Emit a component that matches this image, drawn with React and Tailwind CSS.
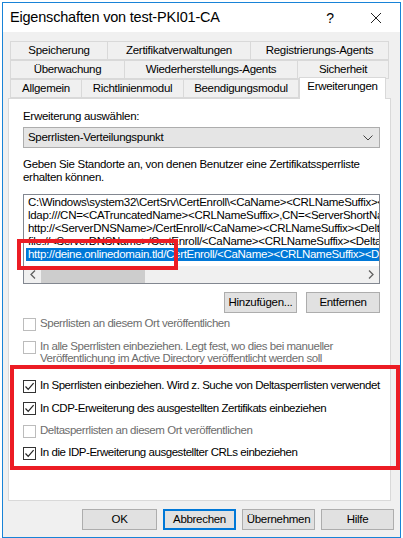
import React from "react";

const Tab = ({ label, w, selected }) => (
  <div
    className={
      selected
        ? "relative z-10 -mt-[2px] -mb-[1px] h-[22px] bg-white border border-[#d9d9d9] border-b-0 flex items-center justify-center shrink-0"
        : "h-[19px] bg-[#f0f0f0] border border-[#d9d9d9] -ml-[1px] first:ml-0 flex items-center justify-center shrink-0"
    }
    style={{ width: w }}
  >
    <span className={selected ? "-mt-[3px]" : ""}>{label}</span>
  </div>
);

const Check = ({ checked, disabled }) => (
  <div
    className={
      "w-[13px] h-[13px] border bg-white shrink-0 flex items-center justify-center " +
      (disabled ? "border-[#bcbcbc]" : "border-[#333333]")
    }
  >
    {checked && (
      <svg width="11" height="11" viewBox="0 0 11 11">
        <path d="M1.5 5.5 L4.2 8.3 L9.6 2.2" fill="none" stroke="#222" strokeWidth="1.2" />
      </svg>
    )}
  </div>
);

const Btn = ({ children, w, focused }) => (
  <div
    className={
      "h-[21px] bg-[#e1e1e1] flex items-center justify-center shrink-0 " +
      (focused ? "border-2 border-[#0078d7]" : "border border-[#adadad]")
    }
    style={{ width: w }}
  >
    {children}
  </div>
);

export default function App() {
  return (
    <div
      className="w-[403px] h-[538px] bg-white pl-[2px] pt-[2px] text-[11.5px] tracking-[-0.3px] text-black leading-none relative overflow-hidden"
      style={{ fontFamily: '"Liberation Sans", Arial, sans-serif' }}
    >
      <div className="w-[399px] h-[536px] border border-[#1883d7] flex flex-col">
        {/* title bar */}
        <div className="h-[29px] bg-white flex items-center pl-[7px] shrink-0">
          <span className="text-[14.5px] tracking-[-0.2px] flex-1">Eigenschaften von test-PKI01-CA</span>
          <span className="text-[14px] w-[46px] text-center">?</span>
          <div className="w-[46px] flex items-center justify-center mr-[1px]">
            <svg width="12" height="12" viewBox="0 0 12 12">
              <path d="M1 1 L11 11 M11 1 L1 11" stroke="#222" strokeWidth="1" fill="none" />
            </svg>
          </div>
        </div>
        {/* body */}
        <div className="flex-1 bg-[#f0f0f0] pl-[5px] pt-[9px] flex flex-col">
          {/* tabs */}
          <div className="ml-[2px] w-[379px] flex flex-col">
            <div className="flex">
              <Tab label="Speicherung" w={98} />
              <Tab label="Zertifikatverwaltungen" w={144} />
              <Tab label="Registrierungs-Agents" w={139} />
            </div>
            <div className="flex">
              <Tab label="Überwachung" w={115} />
              <Tab label="Wiederherstellungs-Agents" w={174} />
              <Tab label="Sicherheit" w={92} />
            </div>
            <div className="flex items-start h-[19px]">
              <Tab label="Allgemein" w={72} />
              <Tab label="Richtlinienmodul" w={103} />
              <Tab label="Beendigungsmodul" w={116} />
              <Tab label="Erweiterungen" w={87} selected />
            </div>
          </div>
          {/* panel */}
          <div className="w-[383px] h-[403px] bg-white border border-[#d9d9d9] pl-[14px] pr-[10px] pt-[12px] flex flex-col whitespace-nowrap">
            <div className="h-[13px]">Erweiterung auswählen:</div>
            <div className="mt-[3px] w-[357px] h-[21px] bg-[#e5e5e5] border border-[#adadad] flex items-center pl-[4px] pr-[6px]">
              <span className="flex-1">Sperrlisten-Verteilungspunkt</span>
              <svg width="10" height="6" viewBox="0 0 10 6">
                <path d="M0.5 0.5 L5 5 L9.5 0.5" stroke="#444" strokeWidth="1" fill="none" />
              </svg>
            </div>
            <div className="mt-[10px] leading-[13px]">
              Geben Sie Standorte an, von denen Benutzer eine Zertifikatssperrliste
              <br />
              erhalten können.
            </div>
            {/* listbox */}
            <div className="mt-[10px] w-[357px] h-[90px] border border-[#828790] bg-white flex flex-col overflow-hidden">
              <div className="flex-1 pt-[1px] pl-[2px] leading-[13px] whitespace-nowrap overflow-hidden">
                <div className="pl-[2px]">{"C:\\Windows\\system32\\CertSrv\\CertEnroll\\<CaName><CRLNameSuffix><DeltaCRLAllowed>.crl"}</div>
                <div className="pl-[2px]">{"ldap:///CN=<CATruncatedName><CRLNameSuffix>,CN=<ServerShortName>,CN=CDP"}</div>
                <div className="pl-[2px]">{"http://<ServerDNSName>/CertEnroll/<CaName><CRLNameSuffix><DeltaCRLAllowed>.crl"}</div>
                <div className="pl-[2px]">{"file://<ServerDNSName>/CertEnroll/<CaName><CRLNameSuffix><DeltaCRLAllowed>.crl"}</div>
                <div className="pl-[2px] bg-[#0078d7] text-white w-[353px] overflow-hidden">
                  {"http://deine.onlinedomain.tld/CertEnroll/<CaName><CRLNameSuffix><DeltaCRLAllowed>.crl"}
                </div>
              </div>
              <div className="h-[17px] bg-[#f0f0f0] flex items-center shrink-0">
                <div className="w-[17px] h-[17px] flex items-center justify-center">
                  <svg width="6" height="9" viewBox="0 0 6 9">
                    <path d="M5 0.5 L1 4.5 L5 8.5" stroke="#606060" strokeWidth="1.3" fill="none" />
                  </svg>
                </div>
                <div className="w-[104px] h-[16px] bg-[#cdcdcd]" />
                <div className="flex-1" />
                <div className="w-[17px] h-[17px] flex items-center justify-center">
                  <svg width="6" height="9" viewBox="0 0 6 9">
                    <path d="M1 0.5 L5 4.5 L1 8.5" stroke="#606060" strokeWidth="1.3" fill="none" />
                  </svg>
                </div>
              </div>
            </div>
            <div className="mt-[8px] w-[357px] flex justify-end gap-[9px]">
              <Btn w={73}>Hinzufügen...</Btn>
              <Btn w={74}>Entfernen</Btn>
            </div>
            <div className="mt-[0px] flex flex-col text-[#6d6d6d] tracking-[-0.45px]">
              <div className="h-[22px] flex items-center gap-[4px]">
                <Check disabled />
                <span>Sperrlisten an diesem Ort veröffentlichen</span>
              </div>
              <div className="mt-[5px] flex items-start gap-[4px]">
                <div className="mt-[1px]"><Check disabled /></div>
                <span className="leading-[12px]">
                  In alle Sperrlisten einbeziehen. Legt fest, wo dies bei manueller
                  <br />
                  Veröffentlichung im Active Directory veröffentlicht werden soll
                </span>
              </div>
            </div>
            <div className="mt-[11px] flex flex-col tracking-[-0.45px]">
              <div className="h-[22px] flex items-center gap-[4px]">
                <Check checked />
                <span>In Sperrlisten einbeziehen. Wird z. Suche von Deltasperrlisten verwendet</span>
              </div>
              <div className="h-[23px] flex items-center gap-[4px]">
                <Check checked />
                <span>In CDP-Erweiterung des ausgestellten Zertifikats einbeziehen</span>
              </div>
              <div className="h-[22px] flex items-center gap-[4px] text-[#6d6d6d]">
                <Check disabled />
                <span>Deltasperrlisten an diesem Ort veröffentlichen</span>
              </div>
              <div className="h-[22px] flex items-center gap-[4px]">
                <Check checked />
                <span>In die IDP-Erweiterung ausgestellter CRLs einbeziehen</span>
              </div>
            </div>
          </div>
          {/* bottom buttons */}
          <div className="mt-[8px] pl-[74px] flex gap-[6px]">
            <Btn w={75}>OK</Btn>
            <Btn w={73} focused>Abbrechen</Btn>
            <Btn w={73}>Übernehmen</Btn>
            <Btn w={73}>Hilfe</Btn>
          </div>
        </div>
      </div>
      {/* red annotations */}
      <div className="absolute left-[17px] top-[239px] w-[161px] h-[31px] border-[4px] border-[#ec1c24]" />
      <div className="absolute left-[10px] top-[365px] w-[390px] h-[105px] border-[4px] border-[#ec1c24]" />
    </div>
  );
}
